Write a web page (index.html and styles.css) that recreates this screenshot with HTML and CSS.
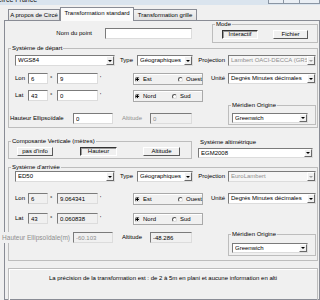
FILE: index.html
```html
<!DOCTYPE html>
<html lang="fr">
<head>
    <meta charset="UTF-8">
    <meta name="viewport" content="width=device-width, initial-scale=1.0">
    <title>Circé France</title>
    <link rel="stylesheet" href="styles.css">
</head>
<body>

    <div class="titlebar">
        <span class="title">Circé France</span>
        <div class="winbtns"><span></span><span></span><span class="close"></span></div>
    </div>

    <div class="tabs">
        <div class="tab tab-about">A propos de Circé</div>
        <div class="tab tab-standard">Transformation standard</div>
        <div class="tab tab-grid">Transformation grille</div>
    </div>

    <div class="panel">
        <div class="point-row">
            <label class="point-label" for="point">Nom du point</label>
            <input class="field point-input" id="point" type="text">
            <fieldset class="group mode">
                <legend>Mode</legend>
                <div class="btn-row">
                    <button class="btn pressed interactive">Interactif</button>
                    <button class="btn file">Fichier</button>
                </div>
            </fieldset>
        </div>

        <fieldset class="group system depart">
            <legend>Système de départ</legend>
            <div class="row">
                <div class="combo sys"><span>WGS84</span><i class="arrow"></i></div>
                <span class="lbl lbl-type">Type</span>
                <div class="combo type"><span>Géographiques</span><i class="arrow"></i></div>
                <span class="lbl lbl-right lbl-proj">Projection</span>
                <div class="combo wide off"><span>Lambert OACI-DECCA (GRS</span><i class="arrow"></i></div>
            </div>
            <div class="row lon">
                <span class="lbl lbl-axis">Lon</span>
                <input class="field deg" type="text" value="6">
                <span class="lbl unit">°</span>
                <input class="field min" type="text" value="9">
                <span class="lbl unit quote">'</span>
                <div class="radios">
                    <span class="opt opt-ew"><i class="radio on"></i>Est</span>
                    <span class="opt"><i class="radio"></i>Ouest</span>
                </div>
                <span class="lbl lbl-right lbl-unit">Unité</span>
                <div class="combo wide"><span>Degrés Minutes décimales</span><i class="arrow"></i></div>
            </div>
            <div class="row lat">
                <span class="lbl lbl-axis">Lat</span>
                <input class="field deg" type="text" value="43">
                <span class="lbl unit">°</span>
                <input class="field min" type="text" value="0">
                <span class="lbl unit quote">'</span>
                <div class="radios">
                    <span class="opt opt-ns"><i class="radio on"></i>Nord</span>
                    <span class="opt"><i class="radio"></i>Sud</span>
                </div>
            </div>
            <div class="row heights-row">
                <div class="heights">
                    <span class="lbl lbl-height">Hauteur Ellipsoïdale</span>
                    <input class="field hgt" type="text" value="0">
                    <span class="lbl lbl-alt off">Altitude</span>
                    <input class="field alt" type="text" value="0" disabled>
                </div>
                <fieldset class="group meridian">
                    <legend>Méridien Origine</legend>
                    <div class="combo mer"><span>Greenwich</span><i class="arrow"></i></div>
                </fieldset>
            </div>
        </fieldset>

        <div class="vert-row">
            <fieldset class="group vertical">
                <legend>Composante Verticale (mètres)</legend>
                <div class="btn-row">
                    <button class="btn no-info">pas d'info</button>
                    <button class="btn pressed v-height">Hauteur</button>
                    <button class="btn v-alt">Altitude</button>
                </div>
            </fieldset>
            <div class="altimetry">
                <span class="alti-label">Système altimétrique</span>
                <div class="combo alti"><span>EGM2008</span><i class="arrow"></i></div>
            </div>
        </div>

        <fieldset class="group system arrivee">
            <legend>Système d'arrivée</legend>
            <div class="row">
                <div class="combo sys"><span>ED50</span><i class="arrow"></i></div>
                <span class="lbl lbl-type">Type</span>
                <div class="combo type"><span>Géographiques</span><i class="arrow"></i></div>
                <span class="lbl lbl-right lbl-proj">Projection</span>
                <div class="combo wide off"><span>EuroLambert</span><i class="arrow"></i></div>
            </div>
            <div class="row lon">
                <span class="lbl lbl-axis">Lon</span>
                <input class="field deg ro" type="text" value="6" readonly>
                <span class="lbl unit">°</span>
                <input class="field min ro" type="text" value="9.064341" readonly>
                <span class="lbl unit quote">'</span>
                <div class="radios">
                    <span class="opt opt-ew"><i class="radio on"></i>Est</span>
                    <span class="opt"><i class="radio"></i>Ouest</span>
                </div>
                <span class="lbl lbl-right lbl-unit">Unité</span>
                <div class="combo wide"><span>Degrés Minutes décimales</span><i class="arrow"></i></div>
            </div>
            <div class="row lat">
                <span class="lbl lbl-axis">Lat</span>
                <input class="field deg ro" type="text" value="43" readonly>
                <span class="lbl unit">°</span>
                <input class="field min ro" type="text" value="0.060838" readonly>
                <span class="lbl unit quote">'</span>
                <div class="radios">
                    <span class="opt opt-ns"><i class="radio on"></i>Nord</span>
                    <span class="opt"><i class="radio"></i>Sud</span>
                </div>
            </div>
            <div class="row heights-row">
                <div class="heights">
                    <span class="lbl lbl-height spill off"><span>Hauteur Ellipsoïdale(m)</span></span>
                    <input class="field hgt" type="text" value="-60.103" disabled>
                    <span class="lbl lbl-alt">Altitude</span>
                    <input class="field alt ro" type="text" value="-48.286" readonly>
                </div>
                <fieldset class="group meridian">
                    <legend>Méridien Origine</legend>
                    <div class="combo mer"><span>Greenwich</span><i class="arrow"></i></div>
                </fieldset>
            </div>
        </fieldset>

        <div class="info">La précision de la transformation est : de 2 à 5m en plani et aucune information en alti</div>
    </div>

</body>
</html>
```

FILE: styles.css
```css
* {
    margin: 0;
    padding: 0;
    box-sizing: border-box;
}

body {
    width: 320px;
    height: 300px;
    overflow: hidden;
    background: #f0f0f0;
    color: #000;
    font-family: "Liberation Sans", Arial, sans-serif;
    font-size: 6px;
    line-height: 7px;
}

input,
button {
    font: inherit;
    color: inherit;
}

/* window chrome */

.titlebar {
    display: flex;
    height: 5px;
    overflow: hidden;
    background: #dae4ee;
}

.title {
    margin: -4px 0 0 -3px;
    font-size: 7px;
    line-height: 8px;
    color: #1e1e1e;
}

.winbtns {
    display: flex;
    margin-left: auto;
}

.winbtns span {
    width: 16px;
    height: 4px;
    border: 1px solid #8a95a3;
    border-top: none;
    background: #e9eef4;
}

.winbtns span + span {
    border-left: none;
}

.winbtns .close {
    width: 20px;
}

/* tabs */

.tabs {
    display: flex;
    align-items: flex-end;
    height: 13px;
    margin-top: 2px;
    padding-left: 8px;
}

.tab {
    height: 11px;
    line-height: 10px;
    text-align: center;
    white-space: nowrap;
    border: 1px solid #898c95;
    border-bottom: none;
    background: linear-gradient(#f3f3f3, #e2e2e2);
}

.tab-about {
    width: 52px;
}

.tab-standard {
    position: relative;
    z-index: 1;
    width: 74px;
    height: 14px;
    margin-bottom: -1px;
    line-height: 11px;
    background: #fbfbfb;
}

.tab-grid {
    width: 63px;
    border-left: none;
}

.panel {
    height: 280px;
    margin-left: 4px;
    border: 1px solid #898c95;
    background: #f0f0f0;
}

/* controls */

.group {
    min-width: 0;
    padding: 0 1px;
    border: 1px solid #bdbdbd;
}

.group legend {
    margin-left: 1px;
    padding: 0 1px;
    line-height: 7px;
}

.row,
.btn-row,
.heights {
    display: flex;
    align-items: flex-start;
}

.lbl {
    line-height: 11px;
    white-space: nowrap;
}

.lbl-right {
    padding-right: 3px;
    text-align: right;
}

.off {
    color: #8e8e8e;
}

.field {
    height: 11px;
    padding: 0 2px;
    background: #fff;
    border: 1px solid;
    border-color: #7b7b7b #dcdcdc #dcdcdc #7b7b7b;
    outline: none;
}

.field.ro {
    background: #f0f0f0;
}

.field:disabled {
    background: #f0f0f0;
    color: #8e8e8e;
}

.combo {
    display: flex;
    align-items: center;
    height: 11px;
    padding-left: 2px;
    background: #fff;
    border: 1px solid;
    border-color: #7b7b7b #dcdcdc #dcdcdc #7b7b7b;
    white-space: nowrap;
    overflow: hidden;
}

.combo span {
    flex: 1;
    overflow: hidden;
}

.arrow {
    display: flex;
    align-items: center;
    justify-content: center;
    width: 8px;
    height: 100%;
    border: 1px solid;
    border-color: #fff #6a6a6a #6a6a6a #fff;
    background: #f0f0f0;
}

.arrow::after {
    content: "";
    border-left: 2px solid transparent;
    border-right: 2px solid transparent;
    border-top: 2px solid #000;
}

.combo.off {
    background: #f6f6f6;
}

.combo.off .arrow::after {
    border-top-color: #a0a0a0;
}

.btn {
    height: 9px;
    line-height: 7px;
    text-align: center;
    background: #f0f0f0;
    border: 1px solid;
    border-color: #fff #5a5a5a #5a5a5a #fff;
}

.btn.pressed {
    border-color: #333 #fff #fff #333;
    box-shadow: inset 1px 1px #9a9a9a;
}

.radios {
    display: flex;
    align-items: center;
    width: 70px;
    height: 12px;
    padding-left: 1px;
    border: 1px solid #a9a9a9;
    box-shadow: inset 1px 1px #fff;
}

.opt {
    display: flex;
    align-items: center;
}

.opt-ew {
    width: 44px;
}

.opt-ns {
    width: 37px;
}

.radio {
    width: 5px;
    height: 5px;
    margin-right: 3px;
    border: 1px solid;
    border-color: #555 #ddd #ddd #555;
    border-radius: 50%;
    background: #fff;
}

.radio.on {
    background: radial-gradient(circle, #000 0 1px, #fff 1.3px);
}

/* top row */

.point-row {
    display: flex;
    align-items: flex-start;
}

.point-label {
    width: 40px;
    margin: 7px 0 0 47px;
    line-height: 11px;
    text-align: right;
}

.point-input {
    width: 87px;
    margin: 7px 0 0 13px;
}

.mode {
    width: 106px;
    margin-left: 20px;
    padding: 2px 1px 3px;
}

.interactive {
    width: 36px;
    margin-left: 8px;
}

.file {
    width: 35px;
    margin-left: 15px;
}

/* systems */

.system {
    width: 310px;
    margin-left: 3px;
}

.depart {
    margin-top: 2px;
    padding: 3px 1px 2px;
}

.arrivee {
    margin-top: 5px;
    padding: 0 1px 4px;
}

.sys {
    width: 100px;
    margin-left: 5px;
}

.lbl-type {
    width: 17px;
    margin-left: 5px;
}

.type {
    width: 56px;
}

.lbl-proj {
    width: 35px;
}

.wide {
    width: 88px;
}

.lbl-axis {
    width: 13px;
    margin-left: 5px;
}

.deg {
    width: 20px;
}

.min {
    width: 41px;
}

.unit {
    width: 9px;
    padding-left: 2px;
}

.quote {
    width: 35px;
}

.lbl-unit {
    width: 25px;
}

.depart .lon { margin-top: 7px; }
.depart .lat { margin-top: 5px; }
.arrivee .lon { margin-top: 11px; }
.arrivee .lat { margin-top: 8px; }
.arrivee .heights-row { margin-top: 6px; }

.depart .heights { margin-top: 11px; }
.arrivee .heights { margin-top: 1px; }

.lbl-height {
    width: 63px;
}

.spill {
    display: flex;
    justify-content: flex-end;
    padding-right: 3px;
    font-size: 6.5px;
}

.spill span {
    background: #f0f0f0;
}

.hgt {
    width: 40px;
}

.lbl-alt {
    width: 37px;
    padding-left: 9px;
}

.alt {
    width: 42px;
}

.meridian {
    width: 88px;
    margin-left: auto;
}

.depart .meridian { padding: 4px 1px 1px; }
.arrivee .meridian { padding: 5px 1px 2px; }

.mer {
    width: 76px;
    height: 10px;
    margin-left: 2px;
}

/* vertical component */

.vert-row {
    display: flex;
    margin: 10px 0 0 3px;
}

.vertical {
    width: 184px;
    padding: 2px 1px;
}

.no-info {
    width: 36px;
    margin-left: 7px;
}

.v-height {
    width: 37px;
    margin-left: 27px;
}

.v-alt {
    width: 37px;
    margin-left: 26px;
}

.altimetry {
    margin-left: 6px;
}

.alti-label {
    display: block;
    margin-top: 1px;
    padding-left: 2px;
}

.alti {
    width: 115px;
    height: 10px;
    margin-top: 2px;
}

/* info */

.info {
    width: 310px;
    height: 40px;
    margin: 7px 0 0 3px;
    padding-top: 6px;
    text-align: center;
    border: 1px solid #bdbdbd;
    box-shadow: inset 1px 1px #fff;
}
```
